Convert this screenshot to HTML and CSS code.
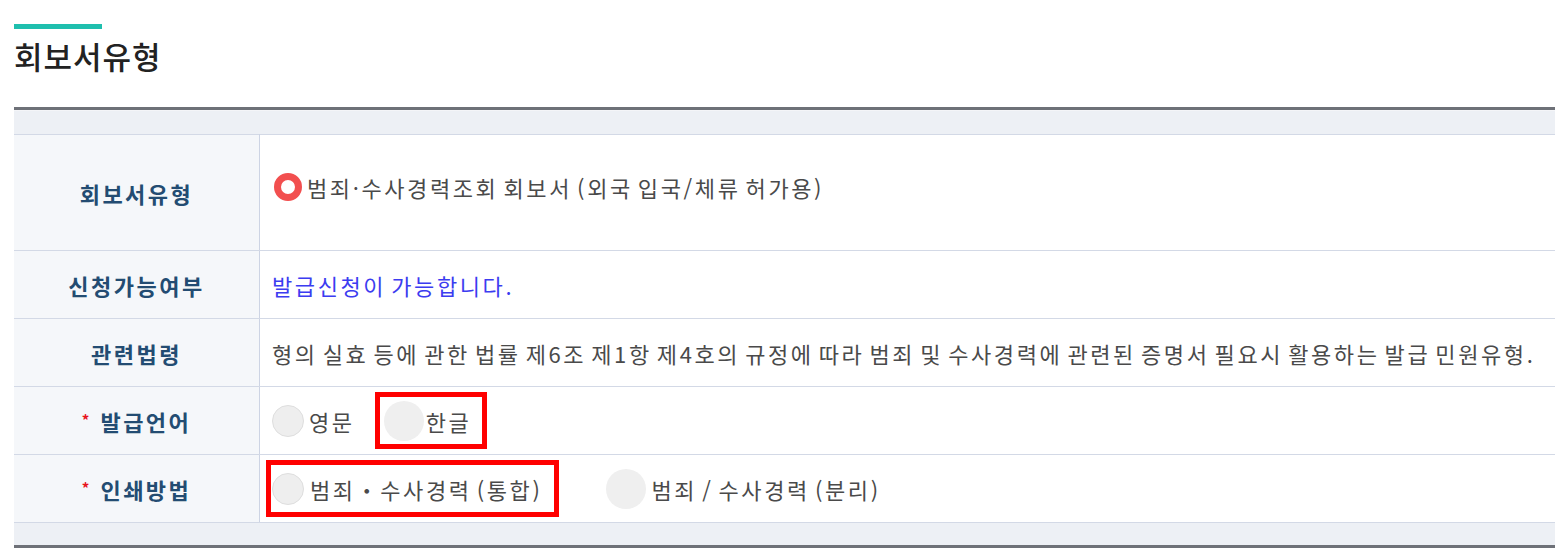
FILE: index.html
```html
<!DOCTYPE html>
<html lang="ko">
<head>
<meta charset="utf-8">
<title>회보서유형</title>
<link rel="stylesheet" href="styles.css">
</head>
<body>
<div class="page">
  <div class="title-bar"></div>
  <h2 class="title">회보서유형</h2>
  <div class="table-wrap">
    <div class="band band-top"></div>
    <table class="form-table">
      <tr class="row-tall">
        <th>회보서유형</th>
        <td class="top">
          <label class="opt"><span class="radio radio-on"></span><span class="opt-text">범죄·수사경력조회 회보서 (외국 입국/체류 허가용)</span></label>
        </td>
      </tr>
      <tr>
        <th>신청가능여부</th>
        <td><span class="ok-text">발급신청이 가능합니다.</span></td>
      </tr>
      <tr>
        <th>관련법령</th>
        <td>형의 실효 등에 관한 법률 제6조 제1항 제4호의 규정에 따라 범죄 및 수사경력에 관련된 증명서 필요시 활용하는 발급 민원유형.</td>
      </tr>
      <tr>
        <th><span class="req">*</span> 발급언어</th>
        <td>
          <div class="opts">
            <label class="opt"><span class="radio"></span><span class="opt-text">영문</span></label>
            <label class="opt opt-box opt-box-1"><span class="radio radio-big"></span><span class="opt-text">한글</span></label>
          </div>
        </td>
      </tr>
      <tr>
        <th><span class="req">*</span> 인쇄방법</th>
        <td>
          <div class="opts">
            <label class="opt opt-box opt-box-2"><span class="radio"></span><span class="opt-text">범죄・수사경력 (통합)</span></label>
            <label class="opt opt-far"><span class="radio radio-big"></span><span class="opt-text">범죄 / 수사경력 (분리)</span></label>
          </div>
        </td>
      </tr>
    </table>
    <div class="band band-bottom"></div>
  </div>
</div>
</body>
</html>
```
FILE: styles.css
```css
html, body {
  margin: 0;
  padding: 0;
  background: #ffffff;
  overflow: hidden;
}
body {
  font-family: "Noto Sans CJK KR", "Noto Sans", sans-serif;
  color: #4a4a4a;
}
.page {
  width: 1600px;
  padding: 24px 0 0 14px;
}
.title-bar {
  width: 88px;
  height: 5px;
  background: #1fbfae;
}
.title {
  margin: 7px 0 0 0;
  font-size: 31px;
  line-height: 40px;
  font-weight: 500;
  letter-spacing: 1px;
  color: #222222;
}
.table-wrap {
  margin-top: 31px;
  border-top: 3px solid #6e7178;
}
.band {
  background: #edf0f5;
}
.band-top {
  height: 23px;
  border-top: 1px solid #f4f5f8;
}
.band-bottom {
  height: 22px;
  border-bottom: 3px solid #6e7178;
}
.form-table {
  width: 100%;
  border-collapse: collapse;
  border-top: 1px solid #d3d9e6;
}
.form-table th,
.form-table td {
  border-bottom: 1px solid #d3d9e6;
  height: 67px;
  padding: 0;
  vertical-align: middle;
}
.form-table th {
  width: 245px;
  background: #f5f7fa;
  border-right: 1px solid #cdd4e4;
  font-size: 22px;
  font-weight: 700;
  letter-spacing: 2.5px;
  color: #234c72;
  text-align: center;
}
.form-table td {
  padding-left: 12px;
  font-size: 22px;
  letter-spacing: 2.6px;
  word-spacing: -3.7px;
  color: #4a4a4a;
  white-space: nowrap;
}
.row-tall th {
  height: 115px;
}
.form-table td.top {
  vertical-align: top;
  padding-top: 36px;
  height: 79px;
}
.req {
  color: #e8141c;
  font-size: 15px;
  vertical-align: 5px;
}
.ok-text {
  color: #3c3cf0;
}
.opts {
  display: flex;
  align-items: center;
}
.opt {
  display: inline-flex;
  align-items: center;
}
.opt-text {
  margin-left: 5px;
}
.radio {
  display: inline-block;
  box-sizing: border-box;
  width: 32px;
  height: 32px;
  border-radius: 50%;
  background: #eeeeee;
  border: 1px solid #dedede;
}
.radio-big {
  width: 40px;
  height: 40px;
  border: none;
  background: #efefef;
}
.radio-on {
  width: 28px;
  height: 28px;
  background: #ffffff;
  border: 7px solid #f24f4f;
  margin-left: 2px;
}
.opt-box {
  border: 5px solid #ff0000;
}
.opt-box-1 {
  margin-left: 20px;
  padding: 4px 11px 3px 4px;
}
.opt-box-1 .opt-text {
  margin-left: 2px;
}
.opt-box-2 {
  margin-left: -6px;
  padding: 8px 12px 7px 1px;
}
.opt-box-2 .opt-text {
  margin-left: 6px;
}
.opt-far {
  margin-left: 47px;
}
```
